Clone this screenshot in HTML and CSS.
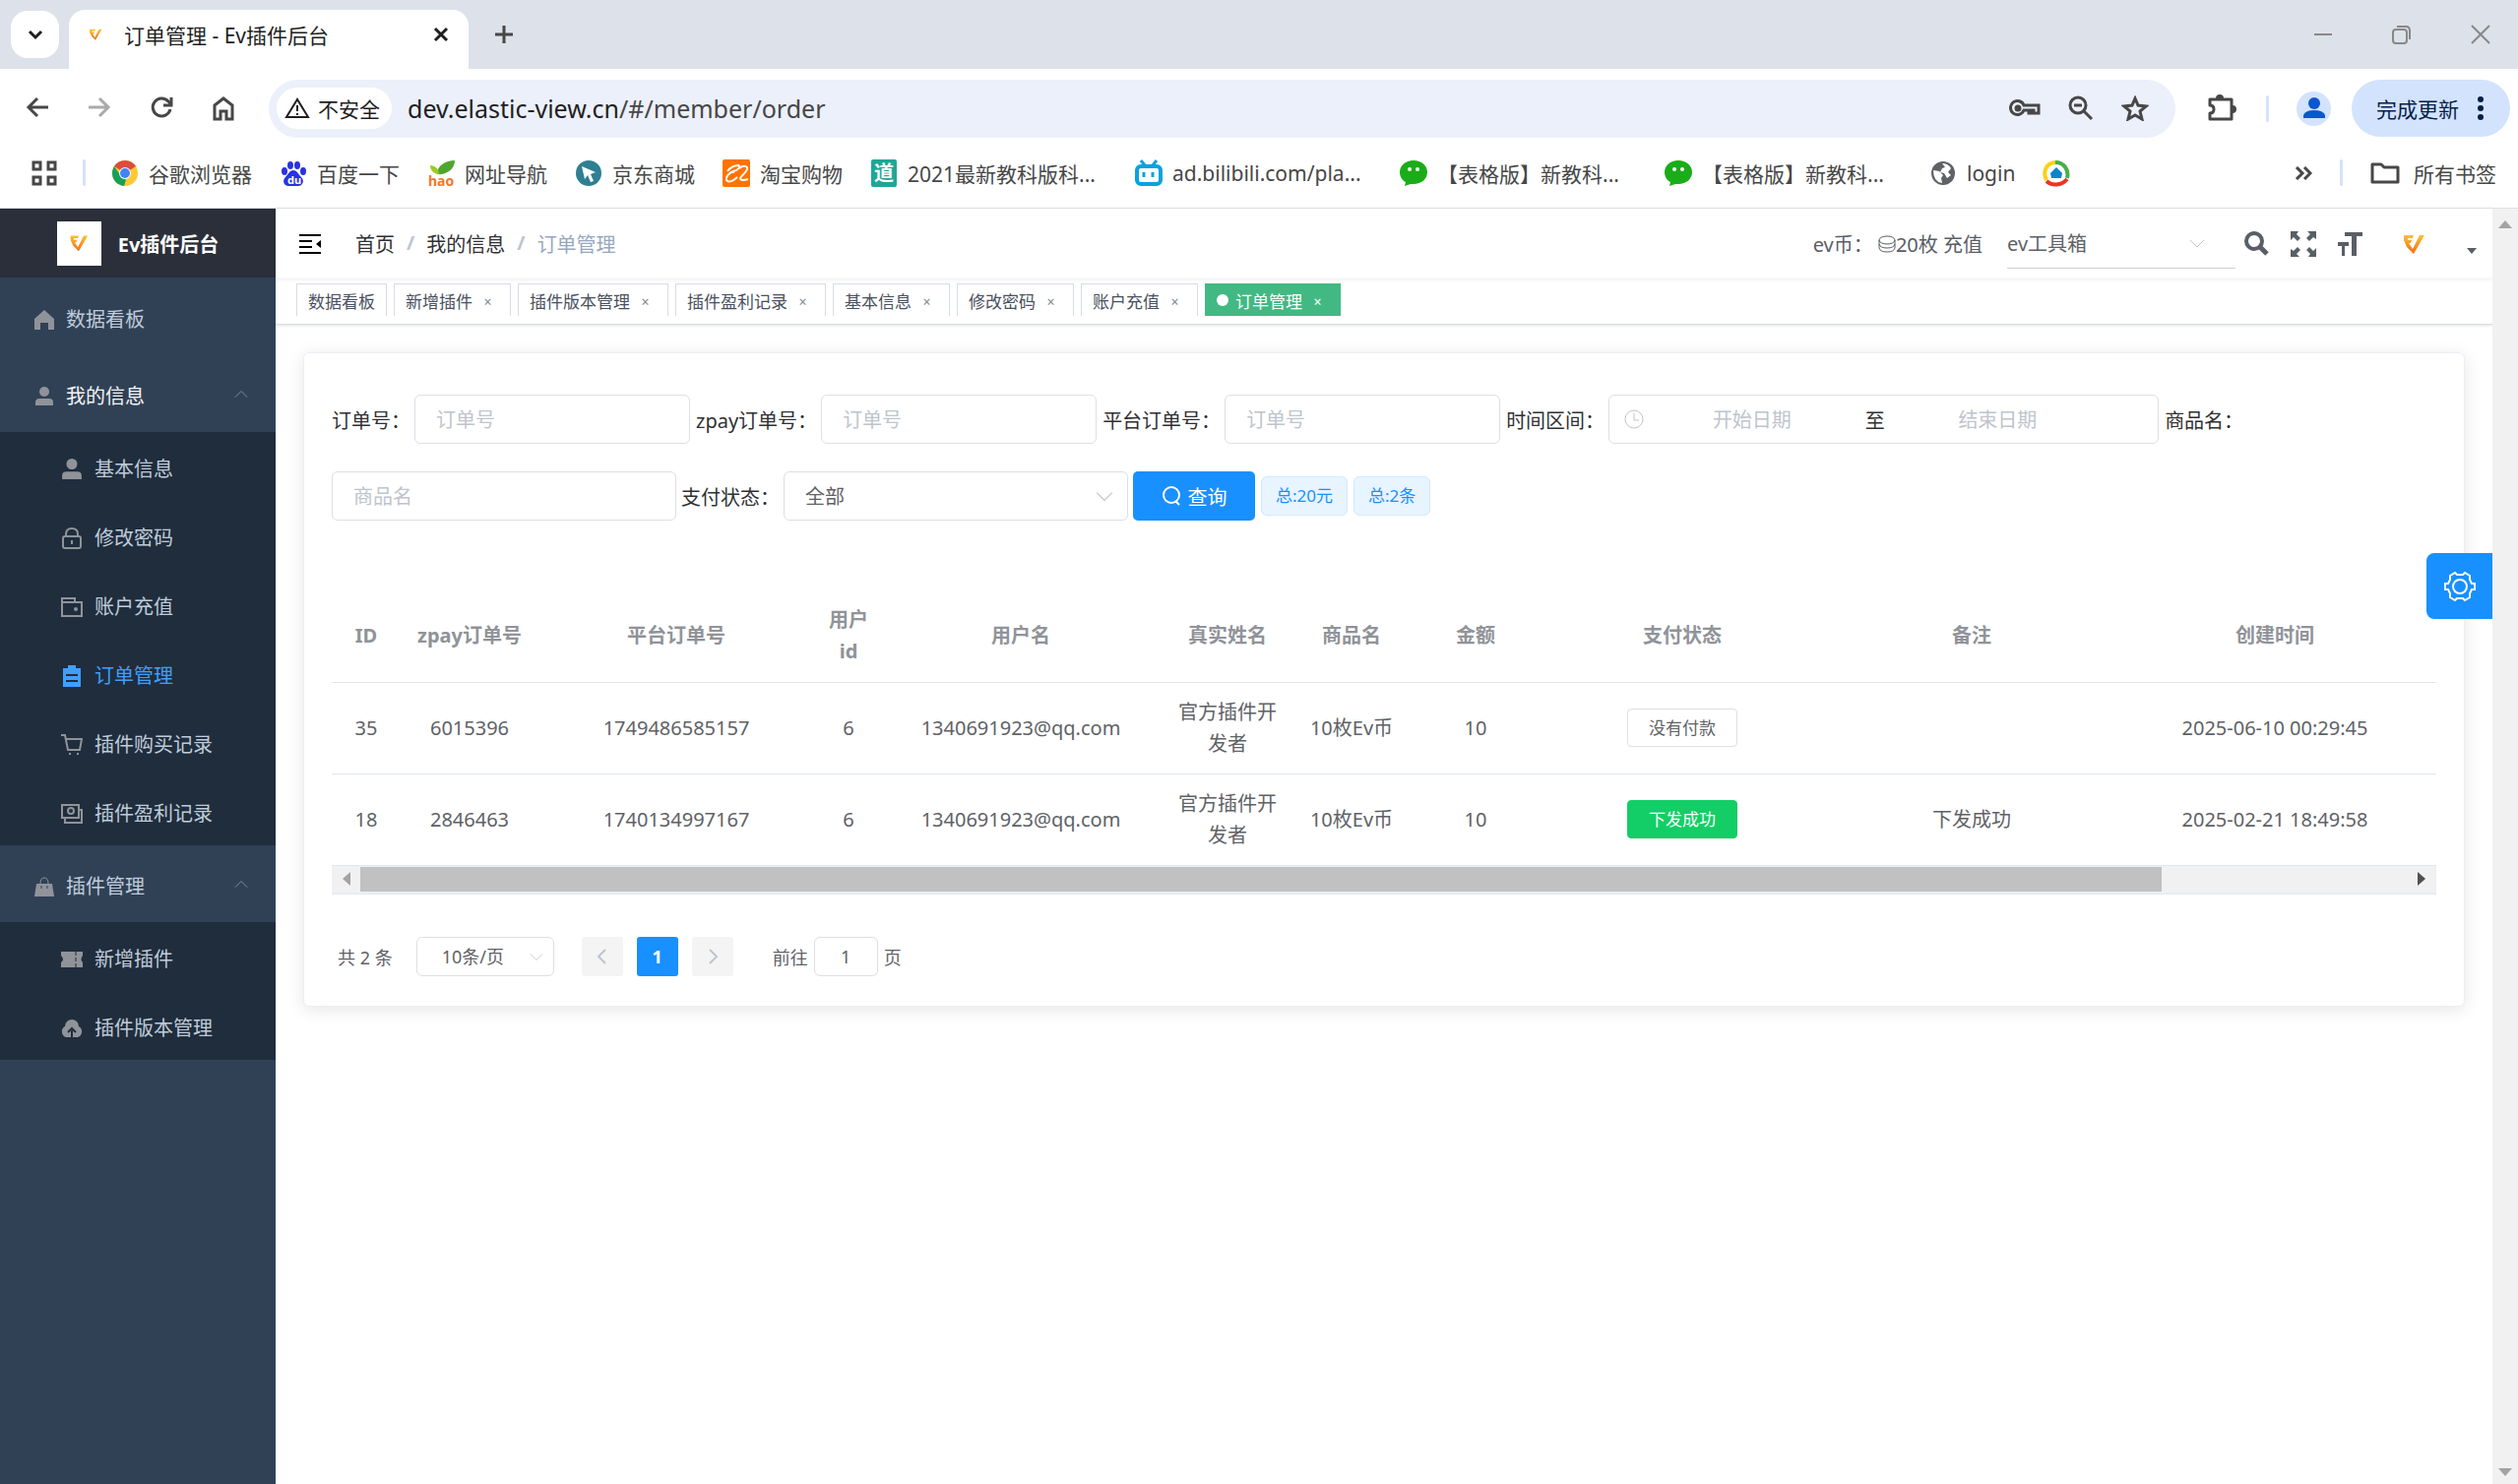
FILE: index.html
```
<!DOCTYPE html>
<html lang="zh-CN">

<head>
    <meta charset="UTF-8">
    <meta name="viewport" content="width=device-width, initial-scale=1.0">
    <title>订单管理 - Ev插件后台</title>
    <link rel="stylesheet" href="styles.css">
</head>

<body>
    <!-- 公用图标 -->
    <svg class="defs" width="0" height="0">
        <defs>
            <linearGradient id="ev-grad" x1="0" y1="0" x2="0" y2="1">
                <stop offset="0" stop-color="#fcc22d" />
                <stop offset="1" stop-color="#f26a1b" />
            </linearGradient>
        </defs>
        <symbol id="ev" viewBox="0 0 24 24">
            <path d="M2 3h10l-1 3H6v2h4l-1 3H7l4 6L18 3h5L12 22 5 15 2 8z" fill="url(#ev-grad)" />
        </symbol>
        <symbol id="user" viewBox="0 0 20 20">
            <ellipse cx="10" cy="5" rx="5" ry="5" />
            <path d="M1 19v-3q0-4 4-4h10q4 0 4 4v3z" />
        </symbol>
        <symbol id="down" viewBox="0 0 16 16">
            <path d="M1 5l7 7 7-7" fill="none" stroke="currentColor" />
        </symbol>
        <symbol id="wechat" viewBox="0 0 28 28">
            <path d="M14 1c8 0 14 5 14 12s-6 12-14 12l-3 0-6 2 1-4C2 21 0 17 0 13 0 6 6 1 14 1z" fill="#1aad19" />
            <circle cx="10" cy="10" r="2" fill="#fff" />
            <circle cx="18" cy="10" r="2" fill="#fff" />
        </symbol>
    </svg>

    <!-- 浏览器标签栏 -->
    <div class="tabstrip">
        <button class="tab-search" aria-label="搜索标签页"><svg width="16" height="16" viewBox="0 0 16 16"><path d="M2 5l6 6 6-6" fill="none" stroke="#1f1f1f" stroke-width="3" /></svg></button>
        <div class="tab">
            <svg class="favicon" width="14" height="14"><use href="#ev" /></svg>
            <span class="tab-title">订单管理 - Ev插件后台</span>
            <button class="plain" aria-label="关闭"><svg width="16" height="16" viewBox="0 0 16 16"><path d="M2 2l12 12M14 2L2 14" stroke="#1f1f1f" stroke-width="3" /></svg></button>
        </div>
        <button class="plain new-tab" aria-label="新标签页"><svg width="20" height="20" viewBox="0 0 20 20"><path d="M10 1v18M1 10h18" stroke="#474747" stroke-width="3" /></svg></button>
        <div class="win-btns">
            <button class="plain" aria-label="最小化"><svg width="20" height="20" viewBox="0 0 20 20"><path d="M1 10h18" stroke="#888" stroke-width="2" /></svg></button>
            <button class="plain" aria-label="还原"><svg width="20" height="20" viewBox="0 0 20 20" fill="none" stroke="#888" stroke-width="2"><rect x="1" y="5" width="14" height="14" rx="3" /><path d="M5 2h9q4 0 4 4v9" /></svg></button>
            <button class="plain" aria-label="关闭窗口"><svg width="20" height="20" viewBox="0 0 20 20"><path d="M1 1l18 18M19 1L1 19" stroke="#888" stroke-width="2" /></svg></button>
        </div>
    </div>

    <!-- 地址栏 -->
    <div class="toolbar">
        <div class="nav-btns">
            <button class="plain" aria-label="后退"><svg width="24" height="24" viewBox="0 0 24 24" fill="none" stroke="#474747" stroke-width="3"><path d="M23 12H4M12 3l-9 9 9 9" /></svg></button>
            <button class="plain" aria-label="前进"><svg width="24" height="24" viewBox="0 0 24 24" fill="none" stroke="#aaa" stroke-width="3"><path d="M1 12h19M12 3l9 9-9 9" /></svg></button>
            <button class="plain" aria-label="刷新"><svg width="24" height="24" viewBox="0 0 24 24" fill="none" stroke="#474747" stroke-width="3"><path d="M21 14a9 9 0 1 1-2-8l3 3M22 2v8h-8" /></svg></button>
            <button class="plain" aria-label="主页"><svg width="24" height="26" viewBox="0 0 24 26" fill="none" stroke="#474747" stroke-width="3"><path d="M3 10l9-7 9 7v14h-6v-8H9v8H3z" /></svg></button>
        </div>
        <div class="omnibox">
            <button class="insecure"><svg width="26" height="22" viewBox="0 0 26 22"><path d="M13 2L2 20h22z" fill="none" stroke="#1f1f1f" stroke-width="2" /><path d="M13 8v6M13 16v2" stroke="#1f1f1f" stroke-width="2" /></svg>不安全</button>
            <span class="url">dev.elastic-view.cn<span>/#/member/order</span></span>
            <div class="omni-icons">
                <svg width="32" height="20" viewBox="0 0 32 20" fill="none" stroke="#474747" stroke-width="3"><path d="M15 7h15v8h-5v-3h-2v3h-3v-3h-5a7 7 0 1 1 0-5z" /><circle cx="9" cy="10" r="2" fill="#474747" /></svg>
                <svg width="26" height="26" viewBox="0 0 26 26" fill="none" stroke="#474747" stroke-width="3"><circle cx="10" cy="10" r="8" /><path d="M16 16l8 8M6 10h8" /></svg>
                <svg width="28" height="26" viewBox="0 0 28 26" fill="none" stroke="#474747" stroke-width="3"><path d="M14 3l3 7 8 1-6 5 2 8-7-4-7 4 2-8-6-5 8-1z" /></svg>
            </div>
        </div>
        <svg class="ext" width="30" height="28" viewBox="0 0 30 28"><path d="M3 5h22v20H3v-6q4 0 4-4t-4-4z" fill="none" stroke="#474747" stroke-width="3" stroke-linejoin="round" /><path d="M9 4a4 4 0 0 1 8 0zM26 11a4 4 0 0 1 0 8z" fill="#474747" /></svg>
        <i class="divider"></i>
        <span class="profile"><svg width="22" height="22" viewBox="0 0 22 22" fill="#0b57d0"><circle cx="11" cy="6" r="6" /><path d="M0 21v-3q2-5 11-5t11 5v3z" /></svg></span>
        <button class="update">完成更新<svg width="6" height="24" viewBox="0 0 6 24" fill="#041e49"><circle cx="3" cy="3" r="3" /><circle cx="3" cy="12" r="3" /><circle cx="3" cy="21" r="3" /></svg></button>
    </div>

    <!-- 书签栏 -->
    <div class="bookmarks">
        <svg width="26" height="26" viewBox="0 0 26 26" fill="none" stroke="#474747" stroke-width="3"><path d="M2 2h7v7H2zM17 2h7v7h-7zM2 17h7v7H2zM17 17h7v7h-7z" /></svg>
        <i class="divider"></i>
        <a href="#"><svg width="28" height="28" viewBox="0 0 28 28"><circle cx="14" cy="14" r="13" fill="#fbc934" /><path d="M14 14L3 7a13 13 0 0 1 22 0z" fill="#dd4b3e" /><path d="M3 7l7 10 5 4-2 6A13 13 0 0 1 3 7z" fill="#1a9f5a" /><circle cx="14" cy="14" r="6" fill="#fff" /><circle cx="14" cy="14" r="5" fill="#4284f3" /></svg>谷歌浏览器</a>
        <a href="#"><svg width="28" height="28" viewBox="0 0 28 28" fill="#2932e1"><ellipse cx="11" cy="6" rx="3" ry="4" /><ellipse cx="18" cy="6" rx="3" ry="4" /><ellipse cx="5" cy="12" rx="3" ry="4" /><ellipse cx="24" cy="12" rx="3" ry="4" /><path d="M14 11c4 0 5 4 8 7 4 4 1 9-3 9H9c-4 0-7-5-3-9 3-3 4-7 8-7z" /><text x="8" y="25" font-size="11" font-weight="bold" fill="#fff">du</text></svg>百度一下</a>
        <a href="#"><svg width="28" height="28" viewBox="0 0 28 28"><path d="M28 1c-9 0-18 5-18 14C18 16 28 11 28 1z" fill="#4fa62e" /><path d="M3 6c5 0 9 4 9 9C7 15 3 11 3 6z" fill="#9bcb1e" /><text x="1" y="27" font-size="14" font-weight="bold" fill="#f0782a">hao</text></svg>网址导航</a>
        <a href="#"><svg width="28" height="28" viewBox="0 0 28 28"><circle cx="14" cy="14" r="13" fill="#2f7f93" /><path d="M7 7l14 6-5 2 3 7-3 1-3-7-3 4z" fill="#fff" /></svg>京东商城</a>
        <a href="#"><svg width="28" height="28" viewBox="0 0 28 28"><rect width="28" height="28" rx="2" fill="#ff7300" /><path d="M5 12c3-4 8-6 11-6 3 1 0 5-5 6-5 2-8 6-7 9 2 3 7 1 11-3M8 13h4M17 9c4-3 9-3 8 1-1 3-5 6-7 9 0 3 5 2 8 1" fill="none" stroke="#fff" stroke-width="2" /></svg>淘宝购物</a>
        <a href="#"><svg width="28" height="28" viewBox="0 0 28 28"><rect x="1" width="26" height="28" rx="2" fill="#1fa796" /><text x="4" y="21" font-size="20" font-weight="bold" fill="#fff">道</text></svg><span>2021最新教科版科...</span></a>
        <a href="#"><svg width="28" height="28" viewBox="0 0 28 28" fill="none" stroke="#09a3dc"><rect x="2" y="7" width="24" height="18" rx="4" stroke-width="4" /><path d="M6 1l4 5M22 1l-4 5" stroke-width="3" /><path d="M9 13v5M18 13v5" stroke-width="3" /></svg><span>ad.bilibili.com/pla...</span></a>
        <a href="#"><svg width="28" height="28"><use href="#wechat" /></svg><span>【表格版】新教科...</span></a>
        <a href="#"><svg width="28" height="28"><use href="#wechat" /></svg><span>【表格版】新教科...</span></a>
        <a href="#"><svg width="28" height="28" viewBox="0 0 28 28"><circle cx="14" cy="14" r="12" fill="#5f6368" /><path d="M4 11l6 1 4 4-2 3 1 5q-9-1-9-13zM13 4q6 0 9 5l-3 4 3 3-4 3-3-5-4-1 2-4 3-1z" fill="#fff" /></svg>login</a>
        <a href="#" aria-label="书签"><svg width="28" height="28" viewBox="0 0 28 28" fill="none" stroke-width="4"><path d="M4 21C0 13 3 4 13 3" stroke="#fbd016" /><path d="M13 3c9 0 14 8 12 16" stroke="#46b04a" /><path d="M25 20c-6 7-16 7-21 2" stroke="#e8352b" /><path d="M14 8l6 6-1 5H9l-1-5z" fill="#0a86c9" stroke="none" /></svg></a>
        <div class="bookmarks-right">
            <svg width="18" height="14" viewBox="0 0 18 14" fill="none" stroke="#474747" stroke-width="3"><path d="M2 1l6 6-6 6M10 1l6 6-6 6" /></svg>
            <i class="divider"></i>
            <a href="#"><svg width="30" height="22" viewBox="0 0 30 22" fill="none" stroke="#474747" stroke-width="3" stroke-linejoin="round"><path d="M2 2h9l3 3h14v15H2z" /></svg>所有书签</a>
        </div>
    </div>

    <div class="app">
        <!-- 侧边菜单 -->
        <aside class="sidebar">
            <a href="#" class="logo"><span class="logo-img"><svg width="20" height="20"><use href="#ev" /></svg></span>Ev插件后台</a>
            <ul class="menu">
                <li><a href="#"><svg width="20" height="20" viewBox="0 0 20 20"><path d="M10 0l10 9v11h-6v-7H6v7H0V9z" /></svg>数据看板</a></li>
                <li>
                    <a href="#" class="opened"><svg width="20" height="20"><use href="#user" /></svg>我的信息<svg class="arrow" width="14" height="14"><use href="#down" /></svg></a>
                    <ul>
                        <li><a href="#"><svg width="22" height="22"><use href="#user" /></svg>基本信息</a></li>
                        <li><a href="#"><svg width="22" height="22" viewBox="0 0 22 22" fill="none" stroke="currentColor" stroke-width="2"><rect x="2" y="9" width="18" height="12" rx="2" /><path d="M5 9V7q0-6 6-6t6 6v2M11 13v4" /></svg>修改密码</a></li>
                        <li><a href="#"><svg width="22" height="22" viewBox="0 0 22 22" fill="none" stroke="currentColor" stroke-width="2"><path d="M1 20V2h13v4M1 6h20v14H1z" /><circle cx="15" cy="13" r="1" /></svg>账户充值</a></li>
                        <li><a href="#" class="active"><svg width="22" height="22" viewBox="0 0 22 22"><path d="M2 3h18v19H2z" /><path d="M7 0h8v4H7z" /><path d="M5 10h12M5 16h12" stroke="#1f2d3d" stroke-width="2" /></svg>订单管理</a></li>
                        <li><a href="#"><svg width="22" height="22" viewBox="0 0 22 22" fill="none" stroke="currentColor" stroke-width="2"><path d="M0 1h4l3 15h12l2-11H5" /><path d="M8 20h2M16 20h2" /></svg>插件购买记录</a></li>
                        <li><a href="#"><svg width="22" height="22" viewBox="0 0 22 22" fill="none" stroke="currentColor" stroke-width="2"><path d="M1 2h17v13H1zM18 7h3v13H4v-4" /><circle cx="10" cy="8" r="3" /></svg>插件盈利记录</a></li>
                    </ul>
                </li>
                <li>
                    <a href="#"><svg width="20" height="20" viewBox="0 0 20 20"><path d="M2 7h16l2 13H0z" /><path d="M6 7q0-6 4-6t4 6" fill="none" stroke="currentColor" stroke-width="1" /><path d="M7 9v3M13 9v3" stroke="#304156" stroke-width="1" /></svg>插件管理<svg class="arrow" width="14" height="14"><use href="#down" /></svg></a>
                    <ul>
                        <li><a href="#"><svg width="22" height="22" viewBox="0 0 22 22"><path d="M0 3h22v4q-3 4 0 7v5H0v-5q4-3 0-7z" /><path d="M15 3v4M15 9v4M15 15v4" stroke="#1f2d3d" /></svg>新增插件</a></li>
                        <li><a href="#"><svg width="22" height="22" viewBox="0 0 22 22"><path d="M5 20a6 6 0 0 1-1-11 7 7 0 0 1 14 0 6 6 0 0 1-1 11z" /><path d="M11 20v-7M7 15l4-4 4 4" fill="none" stroke="#1f2d3d" stroke-width="2" /></svg>插件版本管理</a></li>
                    </ul>
                </li>
            </ul>
        </aside>

        <main class="main">
            <div class="navbar">
                <button class="plain hamburger" aria-label="收起菜单"><svg width="24" height="20" viewBox="0 0 24 20"><path d="M0 1h22M0 7h13M0 13h13M0 19h22" stroke="#000" stroke-width="2" /><path d="M22 6v8l-5-4z" /></svg></button>
                <nav class="breadcrumb"><a href="#">首页</a><i>/</i><a href="#">我的信息</a><i>/</i><span>订单管理</span></nav>
                <div class="right-menu">
                    <span class="coin">ev币： <svg width="18" height="18" viewBox="0 0 18 18" fill="none" stroke="currentColor"><ellipse cx="9" cy="5" rx="8" ry="4" /><path d="M1 5v8q1 4 8 4t8-4V5M1 9q1 4 8 4t8-4" /></svg>20枚 充值</span>
                    <span class="tool-select"><select aria-label="ev工具箱"><option>ev工具箱</option></select><svg width="16" height="16"><use href="#down" /></svg></span>
                    <svg width="26" height="26" viewBox="0 0 26 26" fill="none" stroke="#5a5e66" stroke-width="4"><circle cx="11" cy="10" r="8" /><path d="M17 16l7 7" stroke-width="5" /></svg>
                    <svg class="full" width="26" height="26" viewBox="0 0 26 26" fill="#5a5e66"><path id="corner" d="M0 0h8L6 3l4 4-3 3-4-4-3 3z" /><use href="#corner" transform="rotate(90 13 13)" /><use href="#corner" transform="rotate(180 13 13)" /><use href="#corner" transform="rotate(270 13 13)" /></svg>
                    <svg width="26" height="26" viewBox="0 0 26 26" fill="#5a5e66"><path d="M7 1h18v4h-6v20h-5V5H7zM0 11h11v4H7v10H4V15H0z" /></svg>
                    <svg class="avatar" width="24" height="24"><use href="#ev" /></svg>
                    <svg class="caret" width="10" height="6" viewBox="0 0 10 6"><path d="M0 0h10L5 6z" fill="#5a5e66" /></svg>
                </div>
            </div>

            <div class="tags-view">
                <a href="#">数据看板</a>
                <a href="#">新增插件<i>×</i></a>
                <a href="#">插件版本管理<i>×</i></a>
                <a href="#">插件盈利记录<i>×</i></a>
                <a href="#">基本信息<i>×</i></a>
                <a href="#">修改密码<i>×</i></a>
                <a href="#">账户充值<i>×</i></a>
                <a href="#" class="current">订单管理<i>×</i></a>
            </div>

            <section class="card">
                <form class="filters">
                    <label for="orderNo">订单号：</label>
                    <input id="orderNo" type="text" placeholder="订单号">
                    <label for="zpayNo">zpay订单号：</label>
                    <input id="zpayNo" type="text" placeholder="订单号">
                    <label for="platNo">平台订单号：</label>
                    <input id="platNo" type="text" placeholder="订单号">
                    <label for="startDate">时间区间：</label>
                    <div class="date-range">
                        <svg width="20" height="20" viewBox="0 0 20 20" fill="none" stroke="#c0c4cc"><circle cx="10" cy="10" r="9" /><path d="M10 4v7h5" /></svg>
                        <input id="startDate" type="text" placeholder="开始日期">
                        <span>至</span>
                        <input type="text" placeholder="结束日期" aria-label="结束日期">
                    </div>
                    <label for="goods">商品名：</label>
                    <input id="goods" class="wide" type="text" placeholder="商品名">
                    <label for="status">支付状态：</label>
                    <span class="select wide"><select id="status"><option>全部</option></select><svg width="18" height="18"><use href="#down" /></svg></span>
                    <button type="button" class="query"><svg width="20" height="20" viewBox="0 0 20 20" fill="none" stroke="#fff" stroke-width="2"><circle cx="10" cy="9" r="8" /><path d="M14 15l4 4" /></svg>查询</button>
                    <span class="total">总:20元</span>
                    <span class="total">总:2条</span>
                </form>

                <table>
                    <colgroup>
                        <col class="w70"><col class="w140"><col class="w280"><col class="w70"><col class="w280"><col class="w140"><col class="w112"><col class="w140"><col class="w280"><col class="w308"><col class="w318">
                    </colgroup>
                    <thead>
                        <tr><th>ID</th><th>zpay订单号</th><th>平台订单号</th><th>用户id</th><th>用户名</th><th>真实姓名</th><th>商品名</th><th>金额</th><th>支付状态</th><th>备注</th><th>创建时间</th></tr>
                    </thead>
                    <tbody>
                        <tr><td>35</td><td>6015396</td><td>1749486585157</td><td>6</td><td>1340691923@qq.com</td><td>官方插件开发者</td><td class="goods">10枚Ev币</td><td>10</td><td><span class="state">没有付款</span></td><td></td><td>2025-06-10 00:29:45</td></tr>
                        <tr><td>18</td><td>2846463</td><td>1740134997167</td><td>6</td><td>1340691923@qq.com</td><td>官方插件开发者</td><td class="goods">10枚Ev币</td><td>10</td><td><span class="state success">下发成功</span></td><td>下发成功</td><td>2025-02-21 18:49:58</td></tr>
                    </tbody>
                </table>
                <div class="h-scroll">
                    <svg width="8" height="14" viewBox="0 0 8 14"><path d="M8 0v14L0 7z" fill="#a3a3a3" /></svg>
                    <div class="track"><div class="thumb"></div></div>
                    <svg width="8" height="14" viewBox="0 0 8 14"><path d="M0 0v14l8-7z" fill="#505050" /></svg>
                </div>

                <div class="pagination">
                    <span>共 2 条</span>
                    <span class="select page-size"><select aria-label="每页条数"><option>10条/页</option></select><svg width="14" height="14"><use href="#down" /></svg></span>
                    <button aria-label="上一页"><svg class="prev" width="16" height="16"><use href="#down" /></svg></button>
                    <button class="on">1</button>
                    <button aria-label="下一页"><svg class="next" width="16" height="16"><use href="#down" /></svg></button>
                    <label for="jump">前往</label>
                    <input id="jump" type="text" value="1">
                    <span>页</span>
                </div>
            </section>
        </main>

        <div class="v-scroll">
            <svg width="14" height="8" viewBox="0 0 14 8"><path d="M0 8h14L7 0z" fill="#a3a3a3" /></svg>
            <svg width="14" height="8" viewBox="0 0 14 8"><path d="M0 0h14L7 8z" fill="#a3a3a3" /></svg>
        </div>
    </div>

    <button class="settings" aria-label="设置"><svg width="32" height="32" viewBox="0 0 32 32" fill="none" stroke="#fff" stroke-width="2"><circle cx="16" cy="16" r="7" /><path d="M11 2l2 2h6l2-2 5 3v4l2 4h3v6h-3l-2 4v4l-5 3-2-2h-6l-2 2-5-3v-4l-2-4H1v-6h3l2-4V5z" /></svg></button>
</body>

</html>
```
FILE: styles.css
```
* {
    box-sizing: border-box;
}

body {
    margin: 0;
    height: 100vh;
    display: flex;
    flex-direction: column;
    overflow: hidden;
    font-family: "Noto Sans", "Noto Sans CJK SC", sans-serif;
    font-size: 20px;
    color: #303133;
    background: #fff;
}

a {
    color: inherit;
    text-decoration: none;
}

i {
    font-style: normal;
}

svg {
    flex: none;
}

button,
input,
select {
    font: inherit;
    color: inherit;
}

button {
    border: none;
    padding: 0;
}

select {
    appearance: none;
    border: none;
    background: none;
    outline: none;
}

.defs {
    position: absolute;
}

.plain {
    background: none;
    display: flex;
}

.divider {
    width: 3px;
    height: 27px;
    border-radius: 2px;
    background: #d3e3fd;
}

/* 标签栏 */
.tabstrip {
    height: 70px;
    flex: none;
    display: flex;
    align-items: center;
    background: #dde1e9;
    padding: 0 28px 0 11px;
    font-size: 21px;
}

.tab-search {
    width: 49px;
    height: 48px;
    border-radius: 17px;
    background: #fff;
    display: flex;
    align-items: center;
    justify-content: center;
}

.tab {
    width: 406px;
    height: 60px;
    margin: 10px 0 0 10px;
    padding: 0 20px 10px 20px;
    border-radius: 16px 16px 0 0;
    background: #fff;
    display: flex;
    align-items: center;
    color: #1f1f1f;
}

.favicon {
    margin-right: 22px;
}

.tab-title {
    flex: 1;
}

.new-tab {
    margin-left: 26px;
}

.win-btns {
    margin-left: auto;
    display: flex;
    gap: 60px;
}

/* 地址栏 */
.toolbar {
    height: 80px;
    flex: none;
    display: flex;
    align-items: center;
    padding: 0 8px 0 26px;
    font-size: 21px;
}

.nav-btns {
    display: flex;
    gap: 39px;
    margin-right: 34px;
}

.omnibox {
    flex: 1;
    height: 59px;
    border-radius: 30px;
    background: #ecf0fa;
    display: flex;
    align-items: center;
    padding: 0 27px 0 8px;
}

.insecure {
    height: 42px;
    border-radius: 21px;
    background: #fff;
    padding: 0 12px 0 8px;
    display: flex;
    align-items: center;
    gap: 8px;
    color: #1f1f1f;
}

.url {
    margin-left: 16px;
    font-size: 25px;
    color: #1f1f1f;
}

.url span {
    color: #474747;
}

.omni-icons {
    margin-left: auto;
    display: flex;
    align-items: center;
    gap: 28px;
}

.ext {
    margin: 0 30px 0 32px;
}

.profile {
    width: 35px;
    height: 35px;
    margin: 0 21px 0 28px;
    border-radius: 50%;
    background: #d3e3fd;
    display: flex;
    align-items: center;
    justify-content: center;
}

.update {
    height: 58px;
    padding: 0 27px 0 25px;
    border-radius: 29px;
    background: #d3e3fd;
    color: #041e49;
    display: flex;
    align-items: center;
    gap: 19px;
}

/* 书签栏 */
.bookmarks {
    height: 62px;
    flex: none;
    display: flex;
    align-items: center;
    gap: 28px;
    padding: 0 22px 10px 32px;
    border-bottom: 1px solid #dfe1e5;
    font-size: 21px;
    color: #474747;
}

.bookmarks > .divider {
    margin: 0 -2px;
}

.bookmarks a {
    display: flex;
    align-items: center;
    gap: 10px;
    white-space: nowrap;
}

.bookmarks a span {
    width: 203px;
}

.bookmarks-right {
    margin-left: auto;
    display: flex;
    align-items: center;
    gap: 28px;
}

.bookmarks-right a {
    gap: 14px;
}

/* 页面主体 */
.app {
    flex: 1;
    min-height: 0;
    display: flex;
}

.sidebar {
    width: 280px;
    background: #304156;
    color: #bfcbd9;
}

.logo {
    height: 70px;
    background: #2b2f3a;
    display: flex;
    align-items: center;
    justify-content: center;
    gap: 17px;
    color: #fff;
    font-weight: bold;
}

.logo-img {
    width: 45px;
    height: 45px;
    background: #fff;
    display: flex;
    align-items: center;
    justify-content: center;
}

.menu,
.menu ul {
    list-style: none;
    margin: 0;
    padding: 0;
}

.menu {
    padding-top: 1px;
}

.menu svg {
    color: #909399;
    fill: #909399;
    margin-top: 3px;
}

.menu svg[fill="none"] {
    fill: none;
}

.menu a {
    height: 78px;
    padding: 2px 28px 0 35px;
    display: flex;
    align-items: center;
    gap: 12px;
}

.menu ul {
    background: #1f2d3d;
}

.menu ul a {
    height: 70px;
    padding: 2px 20px 0 62px;
}

.menu .opened {
    color: #f4f4f5;
}

.menu .active {
    color: #409eff;
}

.menu .active svg {
    fill: #409eff;
}

.menu .arrow {
    margin: 0 0 0 auto;
    transform: rotate(180deg);
}

.main {
    flex: 1;
    min-width: 0;
}

.navbar {
    height: 71px;
    padding: 0 16px 0 24px;
    display: flex;
    align-items: center;
    box-shadow: 0 1px 4px rgba(0, 21, 41, .08);
}

.breadcrumb {
    display: flex;
    gap: 12px;
    margin-left: 33px;
}

.breadcrumb i {
    color: #c0c4cc;
    font-weight: bold;
}

.breadcrumb span {
    color: #97a8be;
}

.right-menu {
    margin-left: auto;
    display: flex;
    align-items: center;
    gap: 22px;
    color: #5a5e66;
}

.coin {
    white-space: pre;
    margin-right: 3px;
}

.coin svg {
    vertical-align: -1px;
}

.tool-select {
    width: 232px;
    height: 50px;
    border-bottom: 1px solid #d0d0d0;
    display: flex;
    align-items: center;
    color: #606266;
    margin-right: -14px;
}

.tool-select select {
    flex: 1;
    padding: 0;
}

.tool-select svg {
    color: #c0c4cc;
    margin-right: 31px;
}

.avatar {
    margin-left: 17px;
}

.caret {
    margin: 14px 0 0 20px;
}

/* 标签页 */
.tags-view {
    height: 47px;
    padding: 5px 21px 0;
    display: flex;
    gap: 7px;
    border-bottom: 1px solid #d8dce5;
    box-shadow: 0 1px 3px rgba(0, 0, 0, .12);
    font-size: 17px;
}

.tags-view a {
    height: 33px;
    padding: 0 11px;
    border: 1px solid #d8dce5;
    border-bottom: none;
    color: #495060;
    display: flex;
    align-items: center;
}

.tags-view a i {
    width: 23px;
    margin-left: 4px;
    text-align: center;
    font-size: 14px;
    color: #808695;
    padding-top: 2px;
}

.tags-view .current {
    background: #42b983;
    border-color: #42b983;
    color: #fff;
}

.tags-view .current i {
    color: #fff;
}

.tags-view .current::before {
    content: "";
    width: 12px;
    height: 12px;
    margin-right: 7px;
    border-radius: 50%;
    background: #fff;
}

/* 内容卡片 */
.card {
    margin: 28px;
    padding: 42px 28px 30px;
    border: 1px solid #ebeef5;
    border-radius: 6px;
    box-shadow: 0 3px 17px rgba(0, 0, 0, .1);
    background: #fff;
}

.filters {
    display: flex;
    flex-wrap: wrap;
    align-items: center;
    row-gap: 28px;
}

.filters label {
    margin-right: 4px;
}

.filters > input,
.date-range,
.select {
    height: 50px;
    border: 1px solid #dcdfe6;
    border-radius: 6px;
    background: #fff;
}

.filters > input {
    width: 280px;
    margin-right: 6px;
    padding: 0 21px;
}

.filters > .wide {
    width: 350px;
    margin-right: 5px;
}

input::placeholder {
    color: #c0c4cc;
    opacity: 1;
}

.date-range {
    width: 559px;
    margin-right: 6px;
    padding: 0 15px;
    display: flex;
    align-items: center;
}

.date-range input {
    flex: 1;
    min-width: 0;
    border: none;
    text-align: center;
}

.date-range span {
    width: 30px;
    text-align: center;
}

.date-range input:last-child {
    margin-right: 38px;
}

.select {
    display: flex;
    align-items: center;
    padding-right: 14px;
    color: #606266;
}

.select select {
    flex: 1;
    min-width: 0;
    height: 100%;
    padding: 0 21px;
}

.select svg {
    color: #c0c4cc;
}

.query {
    width: 124px;
    height: 50px;
    margin-right: 6px;
    border-radius: 5px;
    background: #1890ff;
    color: #fff;
    display: flex;
    align-items: center;
    justify-content: center;
    gap: 7px;
}

.total {
    height: 40px;
    margin-right: 6px;
    padding: 0 14px;
    border: 1px solid #d1e9ff;
    border-radius: 6px;
    background: #e8f4ff;
    color: #1890ff;
    font-size: 17px;
    line-height: 38px;
}

table {
    width: 100%;
    margin-top: 71px;
    table-layout: fixed;
    border-collapse: collapse;
    text-align: center;
    line-height: 32px;
    color: #606266;
}

.w70 {
    width: 70px;
}

.w112 {
    width: 112px;
}

.w140 {
    width: 140px;
}

.w280 {
    width: 280px;
}

.w308 {
    width: 308px;
}

.w318 {
    width: 318px;
}

th,
td {
    height: 93px;
    padding: 0 14px;
    border-bottom: 1px solid #dfe6ec;
}

th {
    color: #909399;
}

th:last-child,
td:last-child {
    padding-right: 24px;
}

.goods {
    padding: 0 10px;
    white-space: nowrap;
}

.state {
    display: inline-block;
    height: 39px;
    padding: 0 21px;
    border: 1px solid #dcdfe6;
    border-radius: 4px;
    font-size: 17px;
    line-height: 37px;
    vertical-align: middle;
}

.success {
    background: #13ce66;
    border-color: #13ce66;
    color: #fff;
}

.h-scroll {
    height: 29px;
    padding: 0 11px;
    display: flex;
    align-items: center;
    gap: 10px;
    background: #f1f1f1;
    border-bottom: 2px solid #e6ebf5;
}

.track {
    flex: 1;
}

.thumb {
    width: 88%;
    height: 25px;
    background: #c1c1c1;
}

.pagination {
    margin-top: 43px;
    padding-left: 6px;
    display: flex;
    align-items: center;
    font-size: 18px;
    color: #606266;
}

.page-size {
    width: 140px;
    height: 40px;
    margin: 0 28px 0 24px;
    padding-right: 10px;
}

.page-size select {
    padding: 0 0 0 25px;
}

.pagination button {
    width: 42px;
    height: 40px;
    margin-right: 14px;
    border-radius: 3px;
    background: #f4f4f5;
    color: #c0c4cc;
    stroke-width: 2px;
    display: flex;
    align-items: center;
    justify-content: center;
}

.pagination .on {
    background: #1890ff;
    color: #fff;
    font-weight: bold;
}

.prev {
    transform: rotate(90deg);
}

.next {
    transform: rotate(270deg);
}

.pagination label {
    margin-left: 26px;
}

.pagination input {
    width: 65px;
    height: 40px;
    margin: 0 6px;
    border: 1px solid #dcdfe6;
    border-radius: 6px;
    text-align: center;
}

.v-scroll {
    width: 26px;
    padding: 12px 0 8px;
    background: #f1f1f1;
    display: flex;
    flex-direction: column;
    align-items: center;
    justify-content: space-between;
}

/* 悬浮设置按钮 */
.settings {
    position: fixed;
    top: 562px;
    right: 26px;
    width: 67px;
    height: 67px;
    border-radius: 8px 0 0 8px;
    background: #1890ff;
    display: flex;
    align-items: center;
    justify-content: center;
}
```
